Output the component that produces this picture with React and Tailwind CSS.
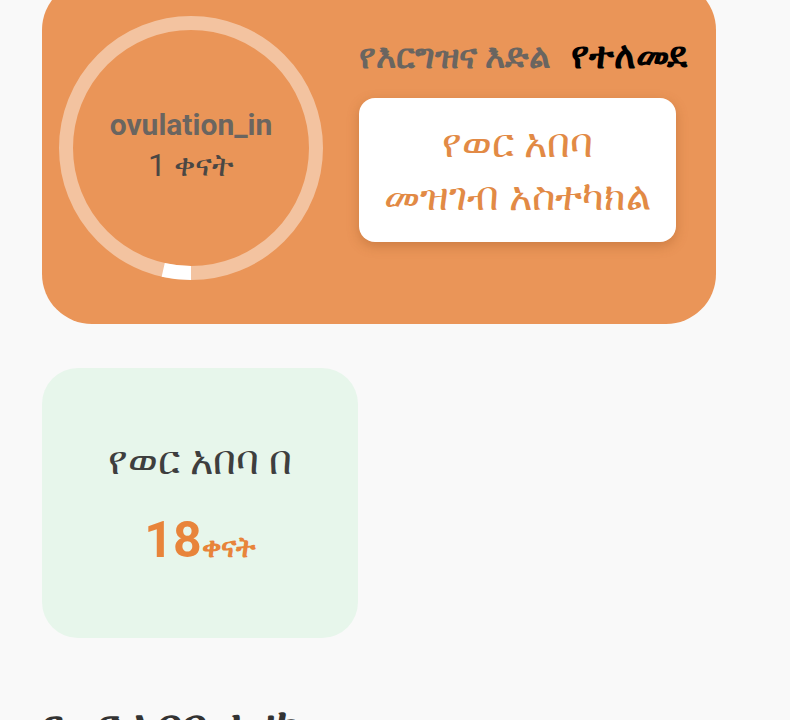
import React from 'react';

// progress ring around the ovulation countdown
const CycleRing = ({ value = 1, total = 28 }) => {
  const size = 264;
  const stroke = 14;
  const r = (size - stroke) / 2;
  const c = 2 * Math.PI * r;
  const arc = (value / total) * c;
  return (
    <svg width={size} height={size} viewBox={`0 0 ${size} ${size}`} className="absolute inset-0">
      <circle cx={size / 2} cy={size / 2} r={r} fill="none" stroke="#F3C3A0" strokeWidth={stroke} />
      {/* starts at 6 o'clock, runs clockwise */}
      <circle
        cx={size / 2}
        cy={size / 2}
        r={r}
        fill="none"
        stroke="#ffffff"
        strokeWidth={stroke}
        strokeDasharray={`${arc} ${c}`}
        transform={`rotate(90 ${size / 2} ${size / 2})`}
      />
    </svg>
  );
};

const App = () => {
  return (
    <div className="min-h-[720px] w-[790px] overflow-hidden bg-[#F9F9F9] pl-[42px] font-['Roboto','Noto_Sans',sans-serif]">
      {/* Cycle card */}
      <div className="-mt-[20px] flex h-[344px] w-[674px] items-start rounded-[50px] bg-[#EA9558] pl-[17px] pt-[36px]">
        <div className="relative flex h-[264px] w-[264px] shrink-0 flex-col items-center justify-center pb-[4px]">
          <CycleRing value={1} total={28} />
          <span className="relative text-[30px] font-bold leading-[38px] text-[#6A6560]">ovulation_in</span>
          <span className="relative text-[32px] leading-[42px] text-[#4A4744]">1 ቀናት</span>
        </div>
        <div className="ml-[36px] flex flex-col items-start pt-[20px]">
          <div className="flex items-center gap-[20px]">
            <span className="text-[34px] font-bold leading-[40px] text-[#6A6560]">የእርግዝና እድል</span>
            <span className="text-[37px] font-bold leading-[40px] text-black">የተለመደ</span>
          </div>
          <button className="mt-[22px] flex h-[144px] w-[317px] flex-col items-center justify-center rounded-[16px] bg-white text-[40px] leading-[53px] text-[#E28A45] shadow-[0_4px_12px_rgba(150,80,30,0.35)]">
            <span>የወር አበባ</span>
            <span>መዝገብ አስተካክል</span>
          </button>
        </div>
      </div>

      {/* Next period card */}
      <div className="mt-[44px] flex h-[270px] w-[316px] flex-col items-center justify-center rounded-[36px] bg-[#E7F6EB]">
        <span className="text-[40px] leading-[48px] text-[#3E3E3E]">የወር አበባ በ</span>
        <div className="mt-[30px] flex items-baseline text-[#E8843A]">
          <span className="text-[50px] font-bold leading-[50px]">18</span>
          <span className="text-[29px] font-bold">ቀናት</span>
        </div>
      </div>

      <h2 className="mt-[62px] text-[44px] font-bold leading-[52px] text-[#333333]">የወር አበባ ታሪክ</h2>
    </div>
  );
};

export default App;
